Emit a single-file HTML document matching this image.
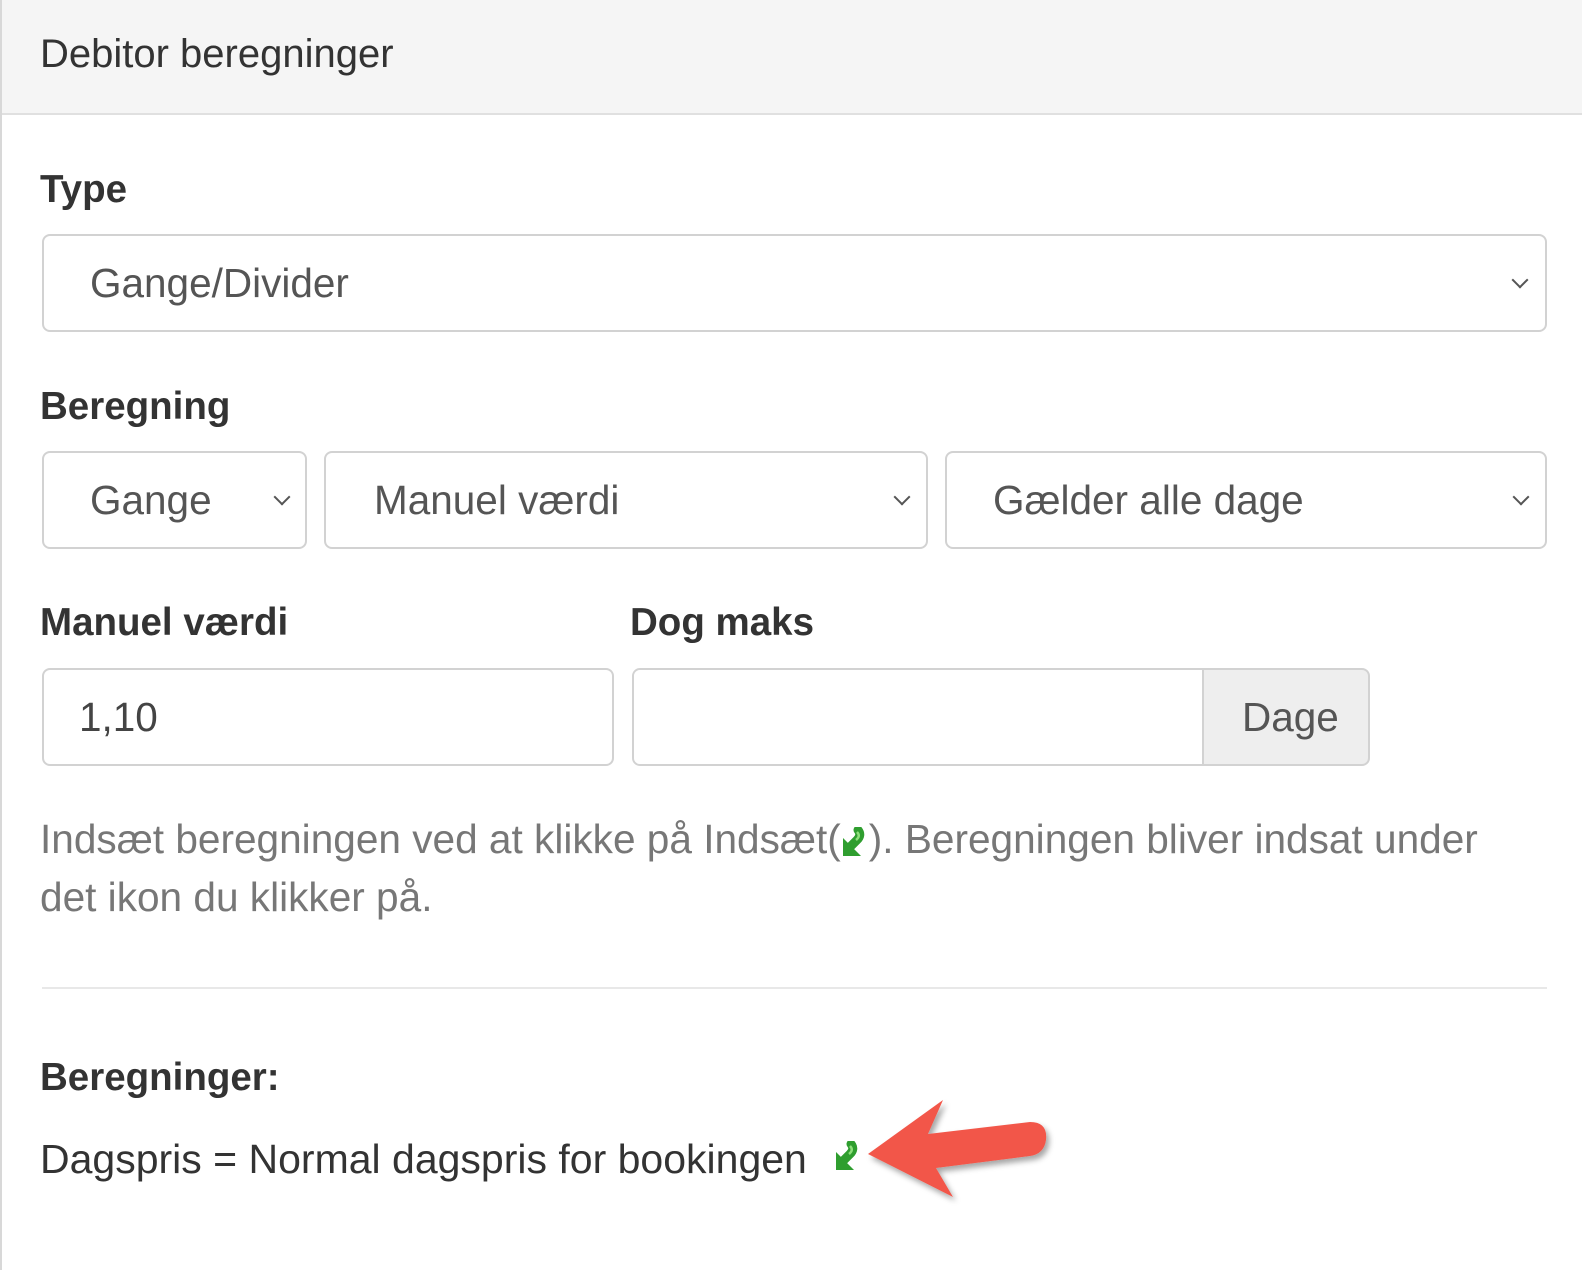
<!DOCTYPE html>
<html><head><meta charset="utf-8"><style>
*{box-sizing:border-box;margin:0;padding:0}
body{width:1582px;height:1270px;background:#fff;font-family:"Liberation Sans",sans-serif;position:relative;overflow:hidden;color:#333}
.a{position:absolute;white-space:nowrap}
.hdr{left:0;top:0;width:1582px;height:115px;background:#f5f5f5;border-bottom:2px solid #e0e0e0}
.lb{position:absolute;left:0;top:0;width:2px;height:1270px;background:#d8d8d8}
.lab{font-weight:bold;font-size:38.5px;color:#333}
.box{position:absolute;border:2px solid #d2d2d2;border-radius:8px;background:#fff;font-size:40.5px;color:#555}
.box span{position:absolute;top:0;line-height:94px}
.chev{position:absolute;top:38px;width:12px;height:12px;border-right:2.5px solid #555;border-bottom:2.5px solid #555;transform:rotate(45deg)}
.help{font-size:40.6px;color:#777}
.ic{display:inline-block;vertical-align:middle}
</style></head><body>
<div class="a hdr"></div>
<div class="lb"></div>
<div class="a" style="left:40px;top:32px;font-size:40px;color:#333">Debitor beregninger</div>

<div class="a lab" style="left:40px;top:168px">Type</div>
<div class="box" style="left:42px;top:234px;width:1505px;height:98px"><span style="left:46px">Gange/Divider</span><i class="chev" style="left:1470px"></i></div>

<div class="a lab" style="left:40px;top:385px">Beregning</div>
<div class="box" style="left:42px;top:451px;width:265px;height:98px"><span style="left:46px">Gange</span><i class="chev" style="left:232px"></i></div>
<div class="box" style="left:324px;top:451px;width:604px;height:98px"><span style="left:48px">Manuel værdi</span><i class="chev" style="left:570px"></i></div>
<div class="box" style="left:945px;top:451px;width:602px;height:98px"><span style="left:46px">Gælder alle dage</span><i class="chev" style="left:568px"></i></div>

<div class="a lab" style="left:40px;top:601px">Manuel værdi</div>
<div class="a lab" style="left:630px;top:601px">Dog maks</div>
<div class="box" style="left:42px;top:668px;width:572px;height:98px;color:#444"><span style="left:35px">1,10</span></div>
<div class="box" style="left:632px;top:668px;width:738px;height:98px;background:#eee"><div style="position:absolute;left:0;top:0;width:570px;height:94px;background:#fff;border-right:2px solid #d2d2d2;border-radius:6px 0 0 6px"></div><span style="left:608px">Dage</span></div>

<div class="a help" style="left:40px;top:816px">Indsæt beregningen ved at klikke på Indsæt(<svg class="ic" width="28" height="30" viewBox="0 0 28 30"><path d="M9 20 L16 13 Q21 8 17 3" fill="none" stroke="#2f9e2f" stroke-width="9" stroke-linecap="round"/><path d="M2 29 L2 11 L20 29 Z" fill="#2f9e2f"/><path d="M16 5 Q20 9 15 13" fill="none" stroke="#8ee07a" stroke-width="2.5"/></svg>). Beregningen bliver indsat under</div>
<div class="a help" style="left:40px;top:874px">det ikon du klikker på.</div>

<div class="a" style="left:42px;top:987px;width:1505px;height:2px;background:#e8e8e8"></div>

<div class="a lab" style="left:40px;top:1056px">Beregninger:</div>
<div class="a" style="left:40px;top:1136px;font-size:41px;color:#333">Dagspris = Normal dagspris for bookingen</div>
<svg class="a" style="left:834px;top:1141px" width="28" height="30" viewBox="0 0 28 30"><path d="M9 20 L16 13 Q21 8 17 3" fill="none" stroke="#2f9e2f" stroke-width="9" stroke-linecap="round"/><path d="M2 29 L2 11 L20 29 Z" fill="#2f9e2f"/><path d="M16 5 Q20 9 15 13" fill="none" stroke="#8ee07a" stroke-width="2.5"/></svg>
<svg class="a" style="left:858px;top:1092px" width="200" height="115" viewBox="0 0 200 115">
<defs><filter id="s" x="-10%" y="-10%" width="130%" height="140%"><feDropShadow dx="3" dy="4" stdDeviation="3" flood-color="#000" flood-opacity="0.35"/></filter></defs>
<path d="M10 62 L85 8 L70 42 L172 30 Q190 30 188 48 Q186 62 172 64 L78 76 L95 105 Z" fill="#f2574a" filter="url(#s)"/>
</svg>
</body></html>
